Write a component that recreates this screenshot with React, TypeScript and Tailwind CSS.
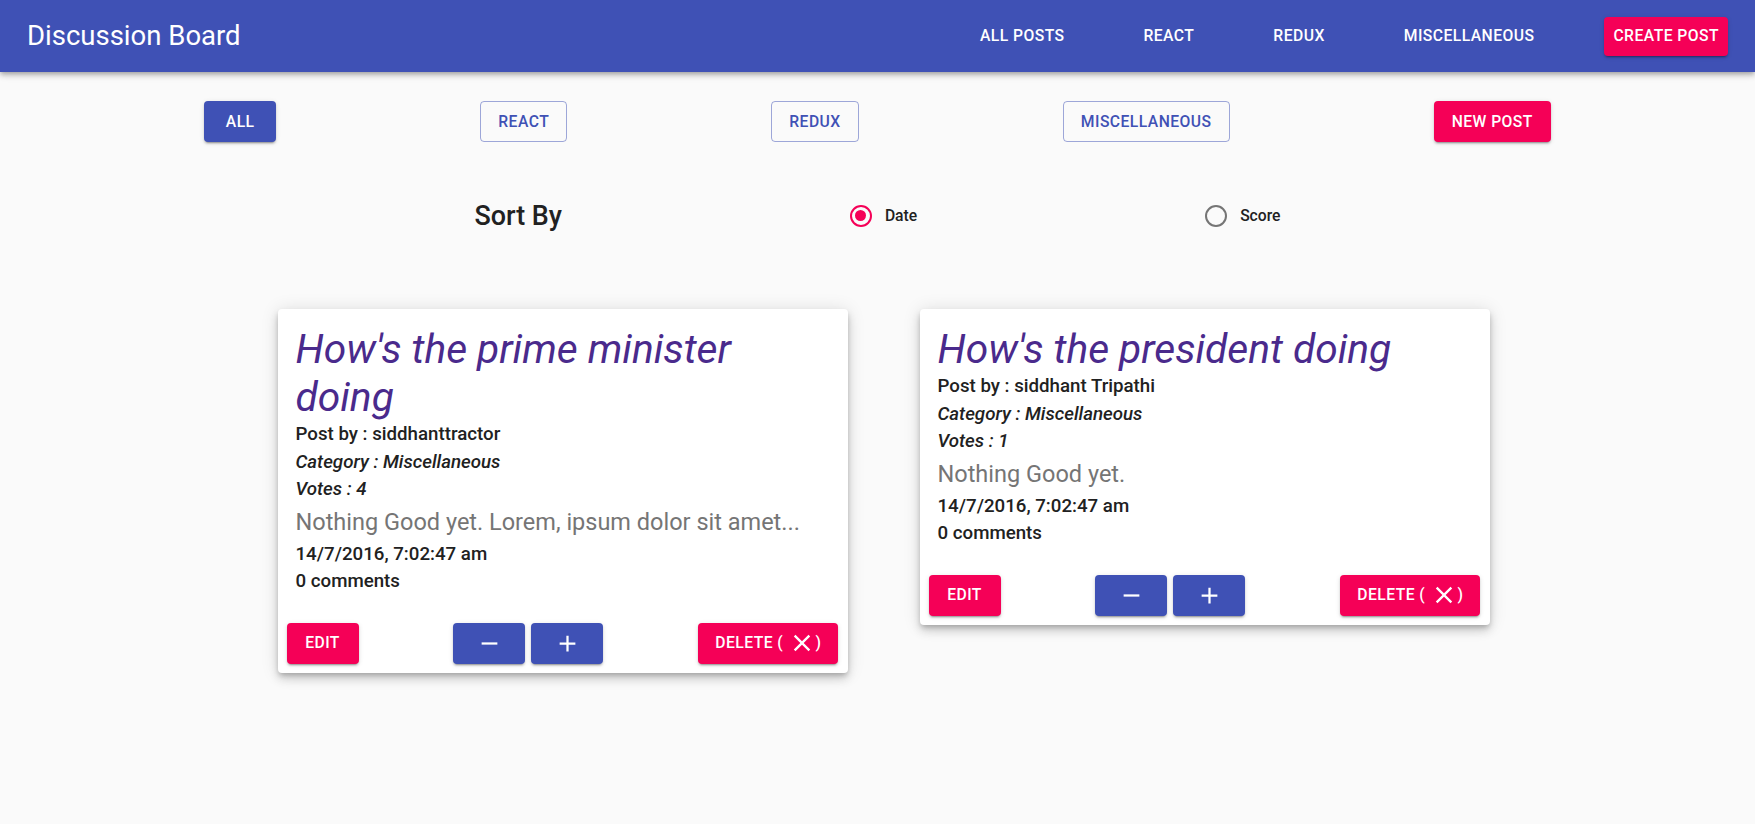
import React, { useState } from "react";

type Post = {
  id: string;
  title: string;
  author: string;
  category: string;
  votes: number;
  body: string;
  date: string;
  comments: number;
};

const posts: Post[] = [
  {
    id: "a",
    title: "How's the prime minister doing",
    author: "siddhanttractor",
    category: "Miscellaneous",
    votes: 4,
    body: "Nothing Good yet. Lorem, ipsum dolor sit amet...",
    date: "14/7/2016, 7:02:47 am",
    comments: 0,
  },
  {
    id: "b",
    title: "How's the president doing",
    author: "siddhant Tripathi",
    category: "Miscellaneous",
    votes: 1,
    body: "Nothing Good yet.",
    date: "14/7/2016, 7:02:47 am",
    comments: 0,
  },
];

const raised =
  "shadow-[0_3px_1px_-2px_rgba(0,0,0,0.2),0_2px_2px_0_rgba(0,0,0,0.14),0_1px_5px_0_rgba(0,0,0,0.12)]";

function Icon({ d, size = 27 }: { d: string; size?: number }) {
  return (
    <svg width={size} height={size} viewBox="0 0 24 24" fill="currentColor">
      <path d={d} />
    </svg>
  );
}

const REMOVE = "M19 13H5v-2h14v2z";
const ADD = "M19 13h-6v6h-2v-6H5v-2h6V5h2v6h6v2z";
const CLOSE =
  "M19 6.41 17.59 5 12 10.59 6.41 5 5 6.41 10.59 12 5 17.59 6.41 19 12 13.41 17.59 19 19 17.59 13.41 12z";

function PostCard({ post }: { post: Post }) {
  return (
    <div className="w-[570px] bg-white rounded-[4px] shadow-[0_3px_5px_-1px_rgba(0,0,0,0.2),0_6px_10px_0_rgba(0,0,0,0.14),0_1px_18px_0_rgba(0,0,0,0.12)]">
      <div className="px-[18px] pt-[16px] pb-[18px] text-[#212121]">
        <h2 className="text-[40.7px] leading-[48px] italic font-normal text-[#4a2a8c]">{post.title}</h2>
        <p className="text-[18.7px] leading-[27.5px] font-medium">Post by : {post.author}</p>
        <p className="text-[18.7px] leading-[27.5px] font-medium italic">Category : {post.category}</p>
        <p className="text-[18.7px] leading-[27.5px] font-medium italic">Votes : {post.votes}</p>
        <p className="text-[23.5px] leading-[37px] text-[#757575]">{post.body}</p>
        <p className="text-[18.7px] leading-[27.5px] font-medium">{post.date}</p>
        <p className="text-[18.7px] leading-[27.5px] font-medium">{post.comments} comments</p>
      </div>
      <div className="flex items-center justify-between p-[9px]">
        <button className={`h-[41px] min-w-[72px] px-[18px] rounded-[4px] bg-[#f50057] text-white text-[15.7px] font-medium tracking-[0.45px] ${raised}`}>
          EDIT
        </button>
        <div className="flex gap-[6px]">
          <button className={`h-[41px] w-[72px] flex items-center justify-center rounded-[4px] bg-[#3f51b5] text-white ${raised}`}>
            <Icon d={REMOVE} />
          </button>
          <button className={`h-[41px] w-[72px] flex items-center justify-center rounded-[4px] bg-[#3f51b5] text-white ${raised}`}>
            <Icon d={ADD} />
          </button>
        </div>
        <button className={`h-[41px] px-[17px] flex items-center rounded-[4px] bg-[#f50057] text-white text-[15.7px] font-medium tracking-[0.45px] whitespace-pre ${raised}`}>
          {"DELETE ( "}
          <Icon d={CLOSE} size={28} />
          {")"}
        </button>
      </div>
    </div>
  );
}

export default function App() {
  const [filter, setFilter] = useState("all");
  const [sort, setSort] = useState("date");

  const filters = [
    { key: "all", label: "ALL" },
    { key: "react", label: "REACT" },
    { key: "redux", label: "REDUX" },
    { key: "misc", label: "MISCELLANEOUS" },
  ];

  return (
    <div className="min-h-screen bg-[#fafafa] font-['Roboto',sans-serif]">
      <header className="h-[72px] bg-[#3f51b5] flex items-center px-[27px] shadow-[0_2px_4px_-1px_rgba(0,0,0,0.2),0_4px_5px_0_rgba(0,0,0,0.14),0_1px_10px_0_rgba(0,0,0,0.12)]">
        <h1 className="text-white text-[27.5px] font-normal flex-1">Discussion Board</h1>
        <nav className="flex items-center gap-[43px] text-white text-[15.7px] font-medium tracking-[0.45px]">
          <button className="px-[18px] py-[7px]">ALL POSTS</button>
          <button className="px-[18px] py-[7px]">REACT</button>
          <button className="px-[18px] py-[7px]">REDUX</button>
          <button className="px-[18px] py-[7px]">MISCELLANEOUS</button>
          <button className={`ml-[9px] h-[39px] px-[9px] rounded-[4px] bg-[#f50057] ${raised}`}>CREATE POST</button>
        </nav>
      </header>

      <div className="flex justify-evenly mt-[29px]">
        {filters.map((f) =>
          filter === f.key ? (
            <button
              key={f.key}
              onClick={() => setFilter(f.key)}
              className={`h-[41px] min-w-[72px] px-[18px] rounded-[4px] bg-[#3f51b5] text-white text-[15.7px] font-medium tracking-[0.45px] ${raised}`}
            >
              {f.label}
            </button>
          ) : (
            <button
              key={f.key}
              onClick={() => setFilter(f.key)}
              className="h-[41px] min-w-[72px] px-[17px] rounded-[4px] border border-[#3f51b5]/50 text-[#3f51b5] text-[15.7px] font-medium tracking-[0.45px]"
            >
              {f.label}
            </button>
          )
        )}
        <button className={`h-[41px] px-[18px] rounded-[4px] bg-[#f50057] text-white text-[15.7px] font-medium tracking-[0.45px] ${raised}`}>
          NEW POST
        </button>
      </div>

      <div className="w-[1094px] mx-auto mt-[56px] h-[36px] flex items-center justify-around">
        <h3 className="text-[26.9px] font-medium text-[#212121]">Sort By</h3>
        {[
          { key: "date", label: "Date" },
          { key: "score", label: "Score" },
        ].map((o) => (
          <label key={o.key} className="flex items-center gap-[13px] cursor-pointer" onClick={() => setSort(o.key)}>
            <span
              className={`w-[22px] h-[22px] rounded-full border-[2.2px] flex items-center justify-center ${
                sort === o.key ? "border-[#f50057]" : "border-[#757575]"
              }`}
            >
              {sort === o.key && <span className="w-[11px] h-[11px] rounded-full bg-[#f50057]" />}
            </span>
            <span className="text-[15.7px] font-medium text-[#212121]">{o.label}</span>
          </label>
        ))}
      </div>

      <div className="flex justify-center items-start gap-[72px] pl-[12px] mt-[75px] pb-[60px]">
        {posts.map((p) => (
          <PostCard key={p.id} post={p} />
        ))}
      </div>
    </div>
  );
}
